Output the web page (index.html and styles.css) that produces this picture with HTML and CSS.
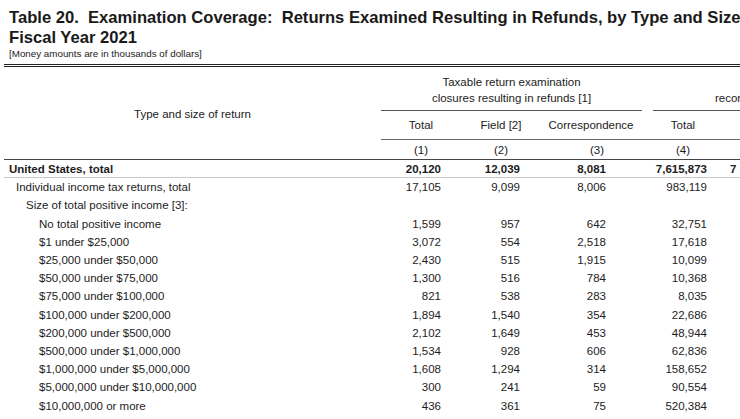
FILE: index.html
```html
<!DOCTYPE html>
<html lang="en">
<head>
<meta charset="utf-8">
<title>Table 20. Examination Coverage</title>
<link rel="stylesheet" href="styles.css">
</head>
<body>
<div class="page">
  <h1 class="title">
    <span class="t-line">Table 20.&nbsp; Examination Coverage:&nbsp; Returns Examined Resulting in Refunds, by Type and Size</span>
    <span class="t-line">Fiscal Year 2021</span>
  </h1>
  <p class="note">[Money amounts are in thousands of dollars]</p>
  <div class="double-rule"></div>
  <div class="grid">
    <div class="stub-head">Type and size of return</div>
    <div class="group g1"><span>Taxable return examination</span><span>closures resulting in refunds [1]</span></div>
    <div class="group g2"><span class="g2-l1">&nbsp;</span><span class="g2-l2">recom</span></div>

    <div class="colhead h1">Total</div>
    <div class="colhead h2">Field [2]</div>
    <div class="colhead h3">Correspondence</div>
    <div class="colhead h4">Total</div>
    <div class="colhead h5"></div>
    <div class="colhead h6"></div>

    <div class="colnum stub"></div>
    <div class="colnum h1">(1)</div>
    <div class="colnum h2">(2)</div>
    <div class="colnum h3n">(3)</div>
    <div class="colnum h4">(4)</div>
    <div class="colnum h5"></div>
    <div class="colnum h6"></div>

    <div class="row total">
      <div class="lbl i0">United States, total</div>
      <div class="num n1">20,120</div><div class="num n2">12,039</div><div class="num n3">8,081</div><div class="num n4">7,615,873</div><div class="num n5">7</div><div class="num n6"></div>
    </div>
    <div class="row">
      <div class="lbl i1">Individual income tax returns, total</div>
      <div class="num n1">17,105</div><div class="num n2">9,099</div><div class="num n3">8,006</div><div class="num n4">983,119</div><div class="num n5"></div><div class="num n6"></div>
    </div>
    <div class="row">
      <div class="lbl i2">Size of total positive income [3]:</div>
      <div class="num n1"></div><div class="num n2"></div><div class="num n3"></div><div class="num n4"></div><div class="num n5"></div><div class="num n6"></div>
    </div>
    <div class="row">
      <div class="lbl i3">No total positive income</div>
      <div class="num n1">1,599</div><div class="num n2">957</div><div class="num n3">642</div><div class="num n4">32,751</div><div class="num n5"></div><div class="num n6"></div>
    </div>
    <div class="row">
      <div class="lbl i3">$1 under $25,000</div>
      <div class="num n1">3,072</div><div class="num n2">554</div><div class="num n3">2,518</div><div class="num n4">17,618</div><div class="num n5"></div><div class="num n6"></div>
    </div>
    <div class="row">
      <div class="lbl i3">$25,000 under $50,000</div>
      <div class="num n1">2,430</div><div class="num n2">515</div><div class="num n3">1,915</div><div class="num n4">10,099</div><div class="num n5"></div><div class="num n6"></div>
    </div>
    <div class="row">
      <div class="lbl i3">$50,000 under $75,000</div>
      <div class="num n1">1,300</div><div class="num n2">516</div><div class="num n3">784</div><div class="num n4">10,368</div><div class="num n5"></div><div class="num n6"></div>
    </div>
    <div class="row">
      <div class="lbl i3">$75,000 under $100,000</div>
      <div class="num n1">821</div><div class="num n2">538</div><div class="num n3">283</div><div class="num n4">8,035</div><div class="num n5"></div><div class="num n6"></div>
    </div>
    <div class="row">
      <div class="lbl i3">$100,000 under $200,000</div>
      <div class="num n1">1,894</div><div class="num n2">1,540</div><div class="num n3">354</div><div class="num n4">22,686</div><div class="num n5"></div><div class="num n6"></div>
    </div>
    <div class="row">
      <div class="lbl i3">$200,000 under $500,000</div>
      <div class="num n1">2,102</div><div class="num n2">1,649</div><div class="num n3">453</div><div class="num n4">48,944</div><div class="num n5"></div><div class="num n6"></div>
    </div>
    <div class="row">
      <div class="lbl i3">$500,000 under $1,000,000</div>
      <div class="num n1">1,534</div><div class="num n2">928</div><div class="num n3">606</div><div class="num n4">62,836</div><div class="num n5"></div><div class="num n6"></div>
    </div>
    <div class="row">
      <div class="lbl i3">$1,000,000 under $5,000,000</div>
      <div class="num n1">1,608</div><div class="num n2">1,294</div><div class="num n3">314</div><div class="num n4">158,652</div><div class="num n5"></div><div class="num n6"></div>
    </div>
    <div class="row">
      <div class="lbl i3">$5,000,000 under $10,000,000</div>
      <div class="num n1">300</div><div class="num n2">241</div><div class="num n3">59</div><div class="num n4">90,554</div><div class="num n5"></div><div class="num n6"></div>
    </div>
    <div class="row">
      <div class="lbl i3">$10,000,000 or more</div>
      <div class="num n1">436</div><div class="num n2">361</div><div class="num n3">75</div><div class="num n4">520,384</div><div class="num n5"></div><div class="num n6"></div>
    </div>
  </div>
</div>
</body>
</html>
```

FILE: styles.css
```css
html, body {
  margin: 0;
  padding: 0;
  background: #ffffff;
}

body {
  width: 740px;
  height: 419px;
  overflow: hidden;
  font-family: "Liberation Sans", Arial, sans-serif;
  color: #1c1c1c;
}

.page {
  padding: 8px 0 0 4px;
  width: 1000px;
}

.title {
  margin: 0;
  padding-left: 5px;
  font-size: 16.6px;
  font-weight: bold;
  line-height: 20px;
  color: #1a1a1a;
}

.t-line {
  display: block;
  white-space: nowrap;
}

.note {
  margin: 0;
  padding-left: 5px;
  font-size: 9.8px;
  line-height: 12px;
  color: #222;
}

.double-rule {
  margin-top: 4px;
  height: 1px;
  border-top: 1px solid #222;
  border-bottom: 1px solid #222;
}

.grid {
  display: grid;
  grid-template-columns: 377px 80px 80px 106px 72px 80px 200px;
  grid-template-rows: 44px 29px 20px;
  grid-auto-rows: 18.2px;
  font-size: 11.5px;
  line-height: 14px;
}

.stub-head {
  grid-column: 1;
  grid-row: 1 / 3;
  text-align: center;
  padding-top: 40px;
}

.group {
  grid-row: 1;
  display: flex;
  flex-direction: column;
  align-items: center;
  padding-top: 7px;
  line-height: 16px;
  border-bottom: 1px solid #555;
  white-space: nowrap;
}

.g1 {
  grid-column: 2 / 5;
  margin-right: 5px;
}

.g2 {
  grid-column: 5 / 8;
  margin-left: 6px;
  align-items: flex-start;
}

.g2-l2 {
  padding-left: 62px;
}

.colhead {
  grid-row: 2;
  display: flex;
  align-items: center;
  justify-content: center;
  border-bottom: 1px solid #666;
  white-space: nowrap;
}

.colhead.h3 {
  padding-right: 6px;
}

.colnum {
  grid-row: 3;
  display: flex;
  align-items: center;
  justify-content: center;
  border-bottom: 1.5px solid #444;
}

.colnum.h3n {
  padding-left: 6px;
}

.row {
  display: contents;
}

.lbl,
.num {
  display: flex;
  align-items: center;
  white-space: nowrap;
}

.num {
  justify-content: flex-end;
}

.total .lbl,
.total .num {
  font-weight: bold;
  border-bottom: 1px solid #c8c8c8;
}

.total .n5 {
  justify-content: flex-start;
  padding-left: 11px;
}

.i0 { padding-left: 5px; }
.i1 { padding-left: 12px; }
.i2 { padding-left: 22px; }
.i3 { padding-left: 35px; }

.n1 { padding-right: 20px; }
.n2 { padding-right: 21px; }
.n3 { padding-right: 41px; }
.n4 { padding-right: 12px; }
.n5 { padding-right: 12px; }
.n6 { padding-right: 12px; }
```
